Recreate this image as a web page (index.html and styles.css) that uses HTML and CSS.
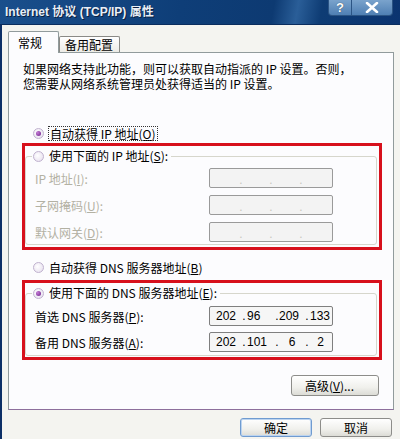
FILE: index.html
```html
<!DOCTYPE html>
<html lang="zh-CN">
<head>
<meta charset="utf-8">
<title>Internet 协议 (TCP/IP) 属性</title>
<link rel="stylesheet" href="styles.css">
</head>
<body>
<div class="window">
  <div class="titlebar">
    <span class="title">Internet 协议 (TCP/IP) 属性</span>
    <div class="ctrls">
      <span class="tbtn help">?</span>
      <span class="tbtn close">
        <svg width="14" height="11" viewBox="0 0 14 11"><path d="M2 1 L12 10 M12 1 L2 10" stroke="#fff" stroke-width="2.6" stroke-linecap="round"/></svg>
      </span>
    </div>
  </div>
  <div class="frame">
    <div class="tabs">
      <div class="tab active">常规</div>
      <div class="tab">备用配置</div>
    </div>
    <div class="panel">
      <p class="desc"><span class="line">如果网络支持此功能，则可以获取自动指派的 IP 设置。否则，</span><span class="line">您需要从网络系统管理员处获得适当的 IP 设置。</span></p>
      <div class="radio-row first"><span class="radio checked"></span><span class="focus">自动获得 IP 地址(<u>O</u>)</span></div>
      <div class="mark mark-ip">
        <fieldset class="group">
          <legend class="legend"><span class="radio"></span><span>使用下面的 IP 地址(<u>S</u>):</span></legend>
          <div class="field disabled"><span class="lbl">IP 地址(<u>I</u>):</span><span class="ip off"><i>.</i><i>.</i><i>.</i></span></div>
          <div class="field disabled"><span class="lbl">子网掩码(<u>U</u>):</span><span class="ip off"><i>.</i><i>.</i><i>.</i></span></div>
          <div class="field disabled"><span class="lbl">默认网关(<u>D</u>):</span><span class="ip off"><i>.</i><i>.</i><i>.</i></span></div>
        </fieldset>
      </div>
      <div class="radio-row dns-auto"><span class="radio"></span><span>自动获得 DNS 服务器地址(<u>B</u>)</span></div>
      <div class="mark mark-dns">
        <fieldset class="group">
          <legend class="legend"><span class="radio checked"></span><span>使用下面的 DNS 服务器地址(<u>E</u>):</span></legend>
          <div class="field"><span class="lbl">首选 DNS 服务器(<u>P</u>):</span><span class="ip"><b class="o1">202</b><i>.</i><b class="o2">96</b><i>.</i><b class="o3">209</b><i>.</i><b class="o4">133</b></span></div>
          <div class="field"><span class="lbl">备用 DNS 服务器(<u>A</u>):</span><span class="ip"><b class="o1">202</b><i>.</i><b class="o2">101</b><i>.</i><b class="o3 c">6</b><i>.</i><b class="o4 c">2</b></span></div>
        </fieldset>
      </div>
      <div class="adv-row"><button class="btn adv">高级(<u>V</u>)...</button></div>
    </div>
    <div class="footer">
      <button class="btn ok">确定</button>
      <button class="btn">取消</button>
    </div>
  </div>
</div>
</body>
</html>
```

FILE: styles.css
```css
* { box-sizing: border-box; }
html, body { margin: 0; padding: 0; }
body {
  width: 400px;
  height: 439px;
  overflow: hidden;
  background: #f4f4f0;
  font-family: "Noto Sans CJK SC", "Liberation Sans", sans-serif;
  font-size: 12px;
  color: #000;
}
.window { width: 400px; height: 439px; display: flex; flex-direction: column; }

.titlebar {
  height: 25px;
  flex: none;
  display: flex;
  justify-content: space-between;
  align-items: flex-start;
  background: linear-gradient(100deg, #1a4f8c 0%, #0e3e78 45%, #0d3a72 68%, #2a5e98 74%, #0e3c74 80%, #0b3470 100%);
  border-bottom: 1px solid #0a2d5e;
}
.title {
  padding: 5px 0 0 5px;
  font-family: "Liberation Sans", "Noto Sans CJK SC", sans-serif;
  font-weight: bold;
  font-size: 12px;
  line-height: 14px;
  color: #e8eef6;
  text-shadow: 1px 1px 0 #0a1f40;
}
.ctrls { display: flex; margin-right: 7px; }
.tbtn {
  height: 16px;
  display: flex;
  align-items: center;
  justify-content: center;
  background: linear-gradient(#7aa3cc, #4f7fb3);
  border: 1px solid #2b5484;
  border-top: none;
  color: #fff;
  font-family: "Liberation Sans", sans-serif;
  font-weight: bold;
  font-size: 13px;
  text-shadow: 0 0 1px #234;
}
.help { width: 24px; border-radius: 0 0 0 4px; }
.close { width: 41px; border-left: none; border-radius: 0 0 4px 0; }

.frame {
  flex: 1;
  border-left: 2px solid #0c2f66;
  padding: 6px 6px 0 6px;
  display: flex;
  flex-direction: column;
}
.tabs { display: flex; align-items: flex-end; height: 21px; position: relative; z-index: 1; }
.tab {
  height: 16px;
  padding: 0 6px 0 5px;
  line-height: 15px;
  border: 1px solid #8a8a86;
  border-bottom: none;
  background: linear-gradient(#ffffff, #ecebe6);
  border-radius: 2px 2px 0 0;
}
.tab.active {
  height: 22px;
  width: 51px;
  margin-bottom: -1px;
  padding: 3px 0 0 9px;
  background: #fcfcfe;
  border-color: #919b9c;
}
.panel {
  height: 358px;
  border: 1px solid #919b9c;
  border-bottom-color: #8d6f9c;
  background: #fcfcfe;
  padding: 8px 14px 0 13px;
  display: flex;
  flex-direction: column;
}
.desc { margin: 0 0 0 1px; }
.line { display: block; line-height: 15px; white-space: nowrap; }

.radio-row { display: flex; align-items: center; height: 14px; padding-left: 11px; }
.radio-row.first { margin-top: 35px; }
.radio-row.dns-auto { margin-top: 10px; }
.radio {
  width: 11px;
  height: 11px;
  flex: none;
  border-radius: 50%;
  border: 1px solid #c0b2cf;
  background: radial-gradient(circle at 40% 40%, #ffffff 0%, #ece6f2 70%, #dcd2e6 100%);
  margin-right: 5px;
  position: relative;
}
.radio.checked::after {
  content: "";
  position: absolute;
  left: 2px; top: 2px;
  width: 5px; height: 5px;
  border-radius: 50%;
  background: radial-gradient(circle at 35% 35%, #c47ad6, #6a1f86);
}
.focus { outline: 1px dotted #333; outline-offset: 0; padding: 0 1px; line-height: 13px; }
u { text-decoration: underline; text-underline-offset: 1px; }

.mark { border: 3px solid #d7101c; margin-right: -3px; }
.mark-ip { margin-top: 3px; height: 107px; }
.mark-dns { margin-top: 6px; height: 80px; }

.group {
  margin: 3px 2px 0 0;
  padding: 0 0 0 9px;
  border: 1px solid #d6d6cc;
  border-radius: 3px;
  min-width: 0;
}
.mark-ip .group { height: 96px; }
.mark-dns .group { height: 70px; }
.legend {
  display: flex;
  align-items: center;
  height: 14px;
  line-height: 14px;
  margin-left: -3px;
  padding: 0 3px 0 1px;
}
.field {
  display: flex;
  align-items: center;
  height: 20px;
  margin-top: 5px;
  justify-content: space-between;
  padding-right: 43px;
}
.mark-ip .field + .field { margin-top: 7px; }
.mark-dns .field { margin-top: 6px; }
.mark-dns .field + .field { margin-top: 6px; }
.disabled .lbl { color: #b3b1a3; }
.ip {
  width: 124px;
  height: 20px;
  border: 1px solid #7f7f7f;
  border-radius: 2px;
  background: #f6f6f6;
  display: flex;
  align-items: center;
  font-family: "Liberation Sans", sans-serif;
  font-size: 12px;
  font-style: normal;
  padding-left: 6px;
}
.ip.off { background: #f3f3f3; border-color: #9a9a9a; padding-left: 0; justify-content: center; gap: 26px; }
.ip i { font-style: normal; width: 4px; text-align: center; }
.ip.off i { color: #c9c7bd; padding-top: 4px; }
.ip b { font-weight: normal; }
.ip .o1 { width: 26px; }
.ip .o2 { width: 29px; padding-left: 1px; }
.ip .o3 { width: 26px; }
.ip .o4 { width: 22px; padding-left: 1px; }
.ip .c { text-align: center; }

.adv-row { display: flex; justify-content: flex-end; margin-top: 15px; }
.btn {
  font-family: "Noto Sans CJK SC", "Liberation Sans", sans-serif;
  font-size: 12px;
  line-height: 14px;
  color: #000;
  height: 20px;
  padding: 0;
  border: 1px solid #8d8d8a;
  border-radius: 3px;
  background: linear-gradient(#ffffff 0%, #f0f0ec 60%, #dcdcd6 100%);
}
.adv { width: 88px; height: 21px; text-align: left; padding-left: 13px; }
.footer { display: flex; justify-content: flex-end; gap: 8px; margin-top: 8px; padding-right: 2px; }
.footer .btn { width: 72px; height: 19px; }
.footer .ok { border-color: #6f9bd0; box-shadow: inset 0 0 0 1px #bcd4f0; }
```
